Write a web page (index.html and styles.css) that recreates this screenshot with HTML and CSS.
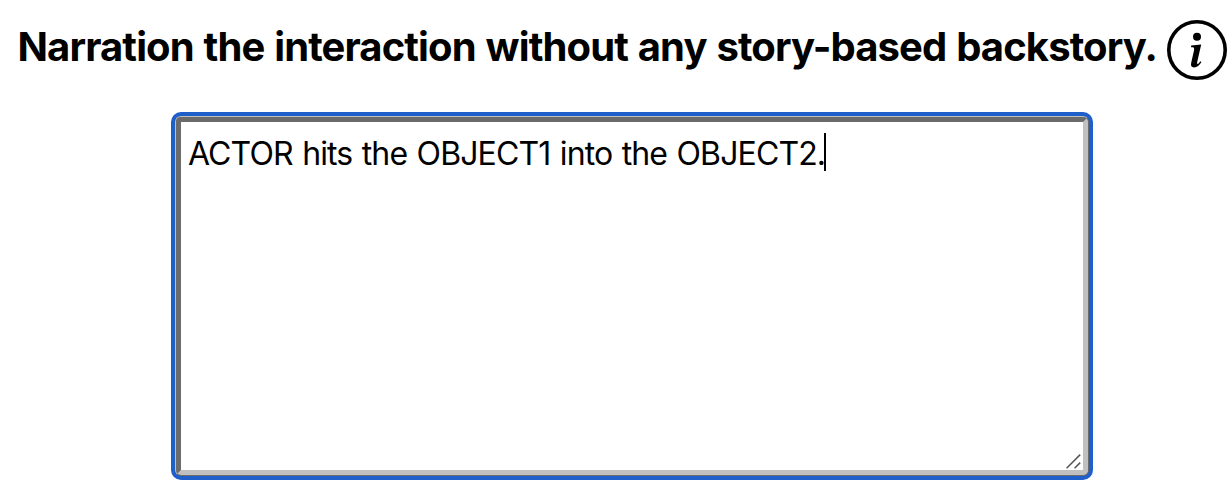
FILE: index.html
```html
<!DOCTYPE html>
<html lang="en">
<head>
<meta charset="utf-8">
<title>Narration</title>
<link rel="stylesheet" href="styles.css">
</head>
<body>
<main class="page">
  <header class="prompt">
    <h1 class="prompt-title">Narration the interaction without any story-based backstory.</h1>
    <svg class="info" viewBox="0 0 62 62" role="img" aria-label="Info">
      <circle cx="31" cy="31" r="28.2" fill="none" stroke="#000" stroke-width="3.6"/>
      <circle cx="31" cy="17.8" r="4"/>
      <path d="M25.2 26.6 L35.2 25.4 L31.2 43 Q30.8 45.6 32 44.9 Q33.3 44 34.4 42.2 L35.4 43 Q32.4 48.4 28 48.4 Q24.2 48.4 25.2 43.8 L28 31.4 Q28.6 28.4 26.8 28.3 L25 28.2 Z"/>
    </svg>
  </header>
  <div class="ring">
    <div class="bevel">
      <div class="field">
        <span class="field-text">ACTOR hits the OBJECT1 into the OBJECT2.</span><span class="caret"></span>
        <svg class="grip" viewBox="0 0 18 18"><path d="M1.6 16.2 L15.2 2.6 M9.6 16.2 L15.2 10.6" fill="none" stroke="#555" stroke-width="1.5"/></svg>
      </div>
    </div>
  </div>
</main>
</body>
</html>
```
FILE: styles.css
```css
* { box-sizing: border-box; }
body { margin: 0; background: #fff; color: #000; font-family: Inter, sans-serif; overflow: hidden; }
.page { height: 488px; display: flex; flex-direction: column; }
.prompt { display: flex; height: 112px; padding: 19px 2px 0 17.5px; align-items: flex-start; justify-content: space-between; }
.prompt-title { margin: 4px 0 0; font-size: 40px; line-height: 48px; font-weight: 680; letter-spacing: -0.88px; word-spacing: 1.2px; white-space: nowrap; }
.info { width: 62px; height: 62px; flex: none; }
.ring { width: 922px; height: 368px; margin-left: 171px; border: 4px solid #1f5fca; border-radius: 10px; background: #1f5fca; }
.bevel { height: 100%; border: 1px solid; border-color: #c0c0c0 #6b6b6b #6b6b6b #c0c0c0; border-radius: 6px; background: #6b6b6b; }
.field { position: relative; display: flex; align-items: flex-start; height: 100%; padding: 11px 7px; border: 5px solid; border-color: #6b6b6b #c0c0c0 #c0c0c0 #6b6b6b; border-radius: 5px; background: #fff; }
.field-text { margin-top: 1px; font-size: 32px; line-height: 40px; letter-spacing: -0.88px; word-spacing: 1.3px; white-space: nowrap; }
.caret { width: 2px; height: 38px; margin-left: -1px; background: #000; }
.grip { position: absolute; right: 0; bottom: 0; width: 18px; height: 18px; }
```
